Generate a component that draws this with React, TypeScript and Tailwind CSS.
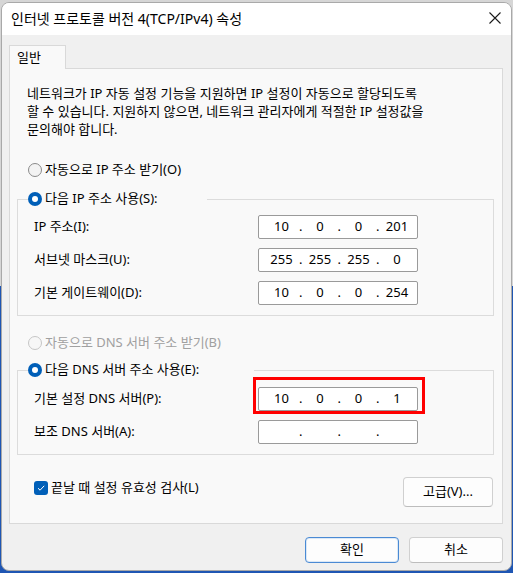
import React from "react";

const FONT = { fontFamily: '"Noto Sans", "Noto Sans CJK KR", sans-serif' };

function Radio({ checked, disabled }: { checked?: boolean; disabled?: boolean }) {
  if (checked) {
    return (
      <span className="flex h-[14px] w-[14px] shrink-0 items-center justify-center rounded-full bg-[#005fb8]">
        <span className="h-[6px] w-[6px] rounded-full bg-white" />
      </span>
    );
  }
  return (
    <span
      className={
        disabled
          ? "h-[14px] w-[14px] shrink-0 rounded-full border border-[#c6c6c6] bg-[#f7f7f7]"
          : "h-[14px] w-[14px] shrink-0 rounded-full border border-[#8a8a8a] bg-[#f3f3f3]"
      }
    />
  );
}

function IpBox({ parts }: { parts: string[] }) {
  return (
    <div className="flex h-[24px] w-[160px] items-center rounded-[2px] border border-[#9a9a9a] bg-white pl-[7px] text-[13px] text-black">
      {parts.map((p, i) => (
        <React.Fragment key={i}>
          <span className="w-[31px] text-center">{p}</span>
          {i < 3 && <span className="w-[7.5px] text-center">.</span>}
        </React.Fragment>
      ))}
    </div>
  );
}

function Row({ label, children, className }: { label: string; children: React.ReactNode; className?: string }) {
  return (
    <div className={"flex items-center pl-[16px] " + (className ?? "")}>
      <span className="w-[224px] text-[13px]">{label}</span>
      {children}
    </div>
  );
}

export default function App() {
  return (
    <div
      className="h-[573px] w-[513px] overflow-hidden bg-[linear-gradient(to_bottom,#d6d6d6_50%,#1f56b3_50%)] pl-[1px] pt-[2px] text-black"
      style={FONT}
    >
      <div className="flex h-[569px] w-[511px] flex-col overflow-hidden rounded-[8px] border border-[#a9a9a9] bg-[#f0f0f0]">
        {/* Title bar */}
        <div className="flex h-[32px] shrink-0 items-center justify-between bg-white pb-[2px] pl-[9px] pr-[9px]">
          <span className="text-[14px]">인터넷 프로토콜 버전 4(TCP/IPv4) 속성</span>
          <svg width="12" height="12" viewBox="0 0 12 12" className="mr-[1px]">
            <path d="M0.5 0.5 L11.5 11.5 M11.5 0.5 L0.5 11.5" stroke="#1a1a1a" strokeWidth="1.1" fill="none" />
          </svg>
        </div>

        {/* Body */}
        <div className="flex flex-col pl-[7px] pr-[8px] pt-[10px]">
          {/* Tab */}
          <div className="relative z-10 -mb-px flex h-[24px] w-[57px] items-center border border-b-0 border-[#d9d9d9] bg-[#f9f9f9] pl-[7px] text-[13px]">
            일반
          </div>
          {/* Panel */}
          <div className="flex h-[456px] w-[494px] flex-col border border-[#d9d9d9] bg-[#f9f9f9] pl-[7px] pr-[9px]">
            <p className="mt-[15px] whitespace-nowrap pl-[10px] text-[13px] leading-[18px]">
              네트워크가 IP 자동 설정 기능을 지원하면 IP 설정이 자동으로 할당되도록
              <br />
              할 수 있습니다. 지원하지 않으면, 네트워크 관리자에게 적절한 IP 설정값을
              <br />
              문의해야 합니다.
            </p>

            <div className="mt-[24px] flex h-[16px] items-center gap-[3px] pl-[11px] text-[13px]">
              <Radio />
              <span>자동으로 IP 주소 받기(O)</span>
            </div>

            <fieldset className="mt-[13px] flex w-[477px] flex-col gap-[9px] border border-[#dcdcdc] pb-[10px]">
              <legend className="ml-[10px] flex h-[16px] w-[179px] items-center gap-[3px] text-[13px]">
                <Radio checked />
                <span>다음 IP 주소 사용(S):</span>
              </legend>
              <Row label="IP 주소(I):" className="mt-[8px]">
                <IpBox parts={["10", "0", "0", "201"]} />
              </Row>
              <Row label="서브넷 마스크(U):">
                <IpBox parts={["255", "255", "255", "0"]} />
              </Row>
              <Row label="기본 게이트웨이(D):">
                <IpBox parts={["10", "0", "0", "254"]} />
              </Row>
            </fieldset>

            <div className="mt-[19px] flex h-[16px] items-center gap-[3px] pl-[11px] text-[13px] text-[#a0a0a0]">
              <Radio disabled />
              <span>자동으로 DNS 서버 주소 받기(B)</span>
            </div>

            <fieldset className="mt-[11px] flex w-[477px] flex-col gap-[9px] border border-[#dcdcdc] pb-[10px]">
              <legend className="ml-[10px] flex h-[16px] w-[226px] items-center gap-[3px] text-[13px]">
                <Radio checked />
                <span>다음 DNS 서버 주소 사용(E):</span>
              </legend>
              <Row label="기본 설정 DNS 서버(P):" className="mt-[9px]">
                <div className="relative">
                  <IpBox parts={["10", "0", "0", "1"]} />
                  <div className="pointer-events-none absolute -bottom-[3px] -left-[5px] -right-[7px] -top-[10px] border-[3px] border-[#ff0000]" />
                </div>
              </Row>
              <Row label="보조 DNS 서버(A):">
                <IpBox parts={["", "", "", ""]} />
              </Row>
            </fieldset>

            <div className="mt-[22px] flex items-start justify-between pl-[17px]">
              <div className="mt-[4px] flex h-[14px] items-center gap-[3px] text-[13px]">
                <span className="flex h-[14px] w-[14px] items-center justify-center rounded-[3px] bg-[#005fb8]">
                  <svg width="10" height="10" viewBox="0 0 10 10">
                    <path d="M2 5.2 L4.1 7.2 L8.2 2.8" stroke="white" strokeWidth="1" fill="none" />
                  </svg>
                </span>
                <span>끝날 때 설정 유효성 검사(L)</span>
              </div>
              <button className="flex h-[30px] w-[90px] items-center justify-center rounded-[4px] border border-[#d0d0d0] border-b-[#bdbdbd] bg-[#fdfdfd] text-[13px]">
                고급(V)...
              </button>
            </div>
          </div>

          {/* Bottom buttons */}
          <div className="mt-[13px] flex justify-end gap-[10px]">
            <button className="flex h-[26px] w-[94px] items-center justify-center rounded-[4px] border border-[#4a8ad4] bg-[#fdfdfd] text-[13px] shadow-[inset_0_0_0_1px_#dbe8f6]">
              확인
            </button>
            <button className="flex h-[26px] w-[94px] items-center justify-center rounded-[4px] border border-[#d0d0d0] border-b-[#bdbdbd] bg-[#fdfdfd] text-[13px]">
              취소
            </button>
          </div>
        </div>
      </div>
    </div>
  );
}
